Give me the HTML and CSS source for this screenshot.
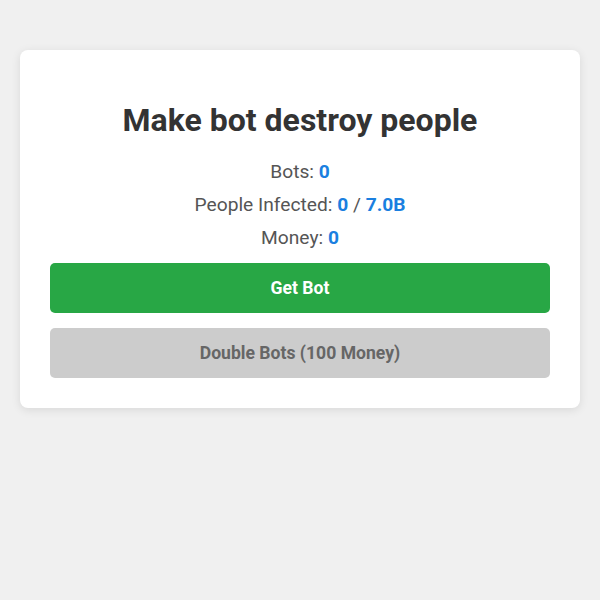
FILE: index.html
```html
<!DOCTYPE html>
<html lang="en">
<head>
<meta charset="utf-8">
<title>Make bot destroy people</title>
<link rel="stylesheet" href="styles.css">
</head>
<body>
<main class="card">
  <h1 class="title">Make bot destroy people</h1>
  <div class="stats">
    <p class="stat">Bots: <span class="val">0</span></p>
    <p class="stat">People Infected: <span class="val">0</span> / <span class="val">7.0B</span></p>
    <p class="stat">Money: <span class="val">0</span></p>
  </div>
  <div class="actions">
    <button class="btn btn-green">Get Bot</button>
    <button class="btn btn-gray" disabled>Double Bots (100 Money)</button>
  </div>
</main>
</body>
</html>
```
FILE: styles.css
```css
html, body {
  margin: 0;
  padding: 0;
}
body {
  background: #f0f0f0;
  font-family: Roboto, "Liberation Sans", Arial, sans-serif;
  color: #333;
  padding: 50px 20px;
}
.card {
  background: #fff;
  border-radius: 8px;
  box-shadow: 0 2px 10px rgba(0,0,0,0.1);
  padding: 30px;
  text-align: center;
}
.title {
  font-size: 32px;
  font-weight: 700;
  line-height: 38px;
  margin: 21px 0 22px;
  color: #333;
}
.stats {
  display: flex;
  flex-direction: column;
  gap: 11px;
}
.stat {
  margin: 0;
  font-size: 19.2px;
  line-height: 22px;
  color: #555;
}
.val {
  color: #1a7fe0;
  font-weight: 700;
}
.actions {
  display: flex;
  flex-direction: column;
  gap: 15px;
  margin-top: 14px;
}
.btn {
  height: 50px;
  border: none;
  border-radius: 5px;
  font-family: inherit;
  font-size: 17.6px;
  font-weight: 700;
  padding: 0;
}
.btn-green {
  background: #28a745;
  color: #fff;
}
.btn-gray {
  background: #cccccc;
  color: #666;
}
```
